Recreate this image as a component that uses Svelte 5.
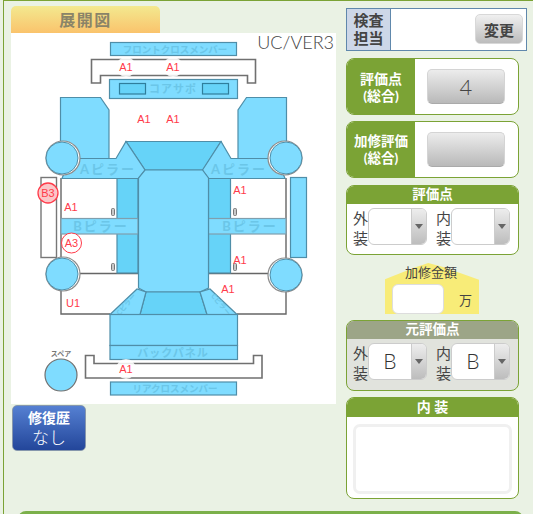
<script>
  const marks = [
    [126, 71, 'A1'], [173, 71, 'A1'], [144, 123, 'A1'], [173, 123, 'A1'],
    [71, 211, 'A1'], [240, 194, 'A1'], [240, 264, 'A1'], [228, 293, 'A1'],
    [73, 307, 'U1'], [126, 373, 'A1']
  ];
  const handles = [[111, 208], [111, 263], [233, 208], [233, 263]];
  const wheels = [[62, 158, 1], [286, 158, -1], [62, 274, 1], [286, 275, -1]];
</script>

<div class="frame">
  <div class="layout">
    <section class="left">
      <h2 class="tab">展開図</h2>
      <svg class="diagram" viewBox="11 33 325 371" width="325" height="371">
        <rect class="blue" x="110.5" y="42.5" width="126" height="13" />
        <text class="lbl small" x="175" y="52.5" text-anchor="middle">フロントクロスメンバー</text>

        <path class="outline" d="M91.5 59.5H255.5V83H247.5V75.5H100.5V83H91.5Z" />

        <path class="blue" d="M60.5 97.5H100.5L109 110V165H60.5Z" />
        <path class="blue" d="M286.5 97.5H246.5L238 110V165H286.5Z" />

        <rect class="white" x="61" y="178" width="225" height="136" />
        <path class="door" d="M61 178V314H110" />
        <path class="door" d="M286 178V314H237" />
        <path class="door" d="M61 273.5H138M286 273.5H208" />

        <rect class="white" x="110" y="98" width="127" height="60" />
        <rect class="blue" x="109.5" y="79.5" width="128" height="19" />
        <rect class="inner" x="119.5" y="83.5" width="26" height="10.5" />
        <rect class="inner" x="202.5" y="83.5" width="26" height="10.5" />
        <text class="lbl" x="173" y="92.5" text-anchor="middle">コアサポ</text>

        <rect class="dark" x="117" y="178" width="21" height="95" />
        <rect class="dark" x="208.5" y="178" width="22" height="95" />

        <rect class="band" x="61" y="218.5" width="77" height="15.5" />
        <rect class="band" x="208.5" y="218.5" width="77.5" height="15.5" />
        <text class="lbl wide" x="101" y="231" text-anchor="middle">Bピラー</text>
        <text class="lbl wide" x="250" y="231" text-anchor="middle">Bピラー</text>

        <path class="dark" d="M126 141.5H221L203 170H145Z" />
        <path class="blue" d="M70 158.5H116L126 141.5L145 170L138.5 178.5H62Z" />
        <path class="blue" d="M277 158.5H231L221 141.5L202.5 170L208.5 178.5H285Z" />
        <text class="lbl wide" x="108" y="173.5" text-anchor="middle">Aピラー</text>
        <text class="lbl wide" x="239" y="173.5" text-anchor="middle">Aピラー</text>

        <path class="blue" d="M145 170H202.5L208.5 178V288L200 292H146L138.5 288V178Z" />

        <path class="dark" d="M146 292H200L207 314.5H140Z" />
        <path class="blue" d="M110 314.5L137 289L146 292L140 314.5Z" />
        <path class="blue" d="M237 314.5L210 289L200 292L207 314.5Z" />
        <text class="lbl tiny" transform="translate(128 306) rotate(-50)" text-anchor="middle">Cピラー</text>
        <text class="lbl tiny" transform="translate(219 306) rotate(50)" text-anchor="middle">Cピラー</text>

        <rect class="blue" x="110" y="314.5" width="127.5" height="31" />
        <rect class="blue" x="110" y="345.5" width="127.5" height="14" />
        <text class="lbl" x="173" y="356.5" text-anchor="middle">バックパネル</text>

        <path class="outline" d="M85.5 355.5H94V363.5H253.5V355.5H262V378H85.5Z" />
        <rect class="blue" x="110.5" y="382" width="126" height="13" />
        <text class="lbl small" x="175" y="392" text-anchor="middle">リアクロスメンバー</text>

        <rect class="side" x="41" y="177.5" width="15.5" height="80" />
        <rect class="blue" x="290.5" y="177.5" width="16" height="80" />

        {#each wheels as [cx, cy, d]}
          <circle class="wheel-out" cx={cx + d} {cy} r="17" />
          <circle class="wheel" {cx} {cy} r="16" />
        {/each}
        <circle class="spare" cx="61" cy="375" r="16" />
        <text class="spare-label" x="61" y="356" text-anchor="middle">スペア</text>

        {#each handles as [x, y]}
          <rect class="handle" x={x + 0.5} y={y + 0.5} width="3" height="7" rx="1" />
        {/each}

        <circle class="halo" cx="126" cy="67" r="10" />
        <circle class="halo" cx="173" cy="67" r="10" />
        <circle class="halo" cx="126" cy="369" r="10" />

        {#each marks as [x, y, t]}
          <text class="mark" {x} {y} text-anchor="middle">{t}</text>
        {/each}

        <circle class="ring" cx="71.5" cy="243" r="10" />
        <text class="mark" x="71.5" y="247" text-anchor="middle">A3</text>
        <circle class="ring filled" cx="48" cy="193" r="10" />
        <text class="mark" x="48" y="197" text-anchor="middle">B3</text>

        <text class="ver" x="334" y="49" text-anchor="end">UC/VER3</text>
      </svg>
      <button class="repair"><b>修復歴</b><span>なし</span></button>
    </section>

    <aside class="right">
      <div class="inspector">
        <div class="ins-label">検査<br />担当</div>
        <div class="ins-body"><button class="change">変更</button></div>
      </div>

      <div class="score">
        <div class="score-label">評価点<br />(総合)</div>
        <div class="score-body"><button class="pad">4</button></div>
      </div>
      <div class="score">
        <div class="score-label narrow">加修評価<br />(総合)</div>
        <div class="score-body"><button class="pad"></button></div>
      </div>

      <div class="panel grade">
        <div class="head">評価点</div>
        <div class="grade-body">
          <span class="tag">外<br />装</span>
          <div class="select"><span class="val"></span><span class="arrow"><i></i></span></div>
          <span class="tag">内<br />装</span>
          <div class="select"><span class="val"></span><span class="arrow"><i></i></span></div>
        </div>
      </div>

      <div class="price">
        <div class="price-title">加修金額</div>
        <div class="price-row"><div class="price-input"></div><span>万</span></div>
      </div>

      <div class="panel grade origin">
        <div class="head">元評価点</div>
        <div class="grade-body">
          <span class="tag">外<br />装</span>
          <div class="select"><span class="val">B</span><span class="arrow"><i></i></span></div>
          <span class="tag">内<br />装</span>
          <div class="select"><span class="val">B</span><span class="arrow"><i></i></span></div>
        </div>
      </div>

      <div class="panel interior">
        <div class="head big">内 装</div>
        <div class="int-body"><div class="area"></div></div>
      </div>
    </aside>
  </div>
  <div class="bottom"></div>
</div>

<style>
  :global(body) { margin: 0; background: #eaf2e4; overflow: hidden; }
  * { box-sizing: border-box; }
  .frame {
    margin-left: 3px; height: 514px; overflow: hidden;
    border-left: 1px solid #7ba335; border-top: 1px solid #7ba335;
    padding: 5px 0 0 7px;
    font-family: Lato, "Noto Sans CJK JP", sans-serif; color: #444;
  }
  .layout { display: flex; height: 505px; }
  .left { width: 335px; flex: none; }
  .tab {
    width: 149px; height: 27px; margin: 0; border-radius: 5px 5px 0 0;
    background: linear-gradient(#f3e98f, #fac36c);
    color: #8a8468; font-size: 16px; line-height: 27px; text-align: center;
    letter-spacing: 1.5px; font-weight: 700;
  }
  .diagram { display: block; background: #fff; }
  .blue { fill: #7fdcff; stroke: #4f8ea8; stroke-width: 1.2; }
  .band { fill: #7fdcff; stroke: #7f9fae; stroke-width: 1.2; }
  .dark { fill: #66d3f8; stroke: #4f8ea8; stroke-width: 1.2; }
  .inner { fill: #66d3f8; stroke: #2f7e9c; stroke-width: 1.2; }
  .white { fill: #fff; }
  .outline { fill: #fff; stroke: #707070; stroke-width: 1.6; }
  .door { fill: none; stroke: #666; stroke-width: 1.4; }
  .side { fill: #fff; stroke: #777; stroke-width: 1.4; }
  .wheel-out { fill: #fff; stroke: #8c8c8c; stroke-width: 1.2; }
  .wheel { fill: #7fdcff; stroke: #4f8ea8; stroke-width: 1; }
  .spare { fill: #7fdcff; stroke: #707070; stroke-width: 1.2; }
  .handle { fill: #c8c8c8; stroke: #777; stroke-width: 1; }
  .halo { fill: #fff; opacity: 0.85; }
  .lbl { fill: #6bc6e8; font-size: 11px; font-weight: 700; letter-spacing: 1px; }
  .lbl.wide { font-size: 13px; letter-spacing: 2px; }
  .lbl.small { font-size: 9.5px; letter-spacing: 0; }
  .lbl.tiny { font-size: 7px; letter-spacing: 0; }
  .spare-label { fill: #777; font-size: 7px; font-weight: 700; }
  .mark { fill: #ff3b4a; font: 11px "Liberation Sans", sans-serif; }
  .ring { fill: #fff; stroke: #ff3b4a; stroke-width: 1; }
  .ring.filled { fill: #fbc6c8; stroke-width: 1.3; }
  .ver { fill: #444; font: 300 18px Lato, sans-serif; }
  .repair {
    display: flex; flex-direction: column; align-items: center; justify-content: center;
    width: 74px; height: 46px; margin: 1px 0 0 1px; padding: 0;
    border: 1px solid #8697ad; border-radius: 5px;
    background: linear-gradient(#5580d2, #23469a); color: #fff;
    font-family: inherit;
  }
  .repair b { font-size: 14px; line-height: 19px; }
  .repair span { font-size: 17px; line-height: 22px; font-weight: 300; }

  .right { width: 181px; margin-top: 2px; flex: none; }
  .inspector {
    display: flex; height: 43px; width: 181px; border: 1px solid #6088ac; background: #fff;
  }
  .ins-label {
    width: 44px; background: #cdd7e8; border-right: 1px solid #6088ac;
    font-size: 15px; font-weight: 700; line-height: 18px; text-align: center; padding-top: 2px;
  }
  .ins-body { flex: 1; display: flex; justify-content: flex-end; padding: 5px 3px 0 0; }
  .change {
    width: 48px; height: 30px; padding: 0; border: 1px solid #d8d8d8; border-radius: 5px;
    background: linear-gradient(#f0f0f0, #bcbcbc); color: #444;
    font: 700 15px "Noto Sans CJK JP", sans-serif;
  }
  .score {
    display: flex; width: 173px; height: 57px; margin-top: 7px; overflow: hidden;
    border: 1px solid #7ba335; border-radius: 8px; background: #fff;
  }
  .score + .score { margin-top: 6px; }
  .score-label {
    width: 68px; background: #7ba335; color: #fff; text-align: center;
    font-size: 14px; font-weight: 700; line-height: 17px;
    display: flex; align-items: center; justify-content: center;
  }
  .score-label.narrow { font-size: 13.5px; white-space: nowrap; }
  .score-body { flex: 1; padding: 10px 0 0 12px; }
  .pad {
    width: 78px; height: 35px; padding: 0; border: 1px solid #d4d4d4; border-radius: 5px;
    border-bottom-color: #aaa;
    background: linear-gradient(#ececec, #b9b9b9); color: #444;
    font: 300 22px Lato, sans-serif;
  }
  .panel {
    width: 173px; overflow: hidden; border: 1px solid #7ba335; border-radius: 8px; background: #fff;
  }
  .head {
    height: 19px; margin: -1px -1px 0; background: #7ba335; color: #fff;
    text-align: center; font-size: 13.5px; font-weight: 700; line-height: 19px;
  }
  .grade { height: 70px; margin-top: 7px; }
  .grade-body { display: flex; padding: 4px 0 0 6px; }
  .tag { width: 15px; font-size: 15px; line-height: 20px; flex: none; }
  .select {
    display: flex; width: 59px; height: 37px; overflow: hidden; flex: none;
    border: 1px solid #ccc; border-radius: 6px; background: #fff;
  }
  .select + .tag { margin-left: 9px; }
  .val { flex: 1; text-align: center; font: 300 21px/34px Lato, sans-serif; color: #333; }
  .arrow {
    width: 15px; flex: none; display: flex; align-items: center; justify-content: center;
    background: linear-gradient(#ededed, #bdbdbd); border-left: 1px solid #ccc;
  }
  .arrow i {
    width: 0; height: 0; border: 4px solid transparent; border-top: 5px solid #666; border-bottom: 0;
  }
  .price {
    width: 94px; height: 51px; margin: 8px 0 0 39px; position: relative;
    padding: 2px 0 0;
  }
  .price::before {
    content: ""; position: absolute; inset: 0; background: #f8ec78;
    clip-path: polygon(0 32%, 30% 10%, 46% 0, 62% 8%, 100% 33%, 100% 100%, 0 100%);
  }
  .price-title {
    position: relative; font-size: 13px; line-height: 15px; text-align: center; margin-left: -2px;
  }
  .price-row { position: relative; display: flex; align-items: center; padding: 4px 0 0 7px; }
  .price-input {
    width: 52px; height: 30px; background: #fff; border: 1px solid #ddd; border-radius: 6px;
  }
  .price-row span { font-size: 13px; margin-left: 15px; }
  .origin { height: 71px; margin-top: 6px; background: #e1e3dd; }
  .origin .head { background: #9ca587; }
  .interior { height: 102px; margin-top: 6px; }
  .head.big { font-size: 14px; height: 20px; line-height: 20px; }
  .int-body { padding: 7px 6px 0; }
  .area { height: 70px; border: 3px solid #f0f0f0; border-radius: 7px; }
  .bottom {
    width: 505px; height: 8px; margin: 0 0 0 7px; border-radius: 8px 8px 0 0; background: #7bb04a;
  }
</style>
